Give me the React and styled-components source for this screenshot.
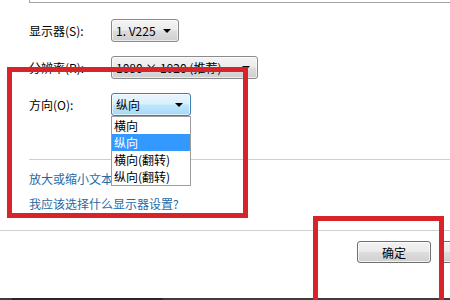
import React from 'react'
import styled, { createGlobalStyle } from 'styled-components'

const GlobalStyle = createGlobalStyle`
  html, body {
    margin: 0;
    padding: 0;
    background: #ffffff;
  }
  body {
    font-family: "Noto Sans CJK SC", "Liberation Sans", sans-serif;
    font-size: 12px;
    color: #000;
  }
`

const Window = styled.div`
  position: relative;
  width: 450px;
  height: 300px;
  overflow: hidden;
  background: #fff;
  display: flex;
  flex-direction: column;
`

const Preview = styled.div`
  height: 2px;
  margin-left: 29px;
  border-left: 1px solid #a3a3a3;
  border-bottom: 1px solid #a3a3a3;
`

const Form = styled.div`
  display: flex;
  flex-direction: column;
  gap: 14px;
  padding: 16px 0 0 29px;
`

const Row = styled.div`
  display: flex;
  align-items: center;
  height: 23px;
  position: relative;
`

const Label = styled.div`
  width: 82px;
  line-height: 16px;
`

const Combo = styled.div`
  box-sizing: border-box;
  width: ${p => p.$w}px;
  height: 23px;
  display: flex;
  align-items: center;
  justify-content: space-between;
  padding: 0 7px 0 4px;
  border: 1px solid ${p => (p.$focus ? '#3c7fb1' : '#8a8a8a')};
  border-radius: 3px;
  background: ${p =>
    p.$focus
      ? 'linear-gradient(#eaf6fd 0%, #d9f0fc 48%, #bee6fd 52%, #a7d9f5 100%)'
      : 'linear-gradient(#f4f4f4 0%, #ebebeb 48%, #dddddd 52%, #cfcfcf 100%)'};
  box-shadow: inset 0 0 0 1px rgba(255, 255, 255, 0.6);
  white-space: nowrap;
`

const Arrow = styled.span`
  width: 0;
  height: 0;
  border-left: 4px solid transparent;
  border-right: 4px solid transparent;
  border-top: 4px solid #000;
`

const List = styled.ul`
  position: absolute;
  top: 23px;
  left: 82px;
  z-index: 2;
  box-sizing: border-box;
  width: 80px;
  margin: 0;
  padding: 0;
  list-style: none;
  background: #fff;
  border: 1px solid #9c9c9c;
`

const Item = styled.li`
  height: 17px;
  line-height: 17px;
  padding-left: 2px;
  background: ${p => (p.$sel ? '#3399ff' : 'transparent')};
  color: ${p => (p.$sel ? '#fff' : '#000')};
`

const Divider = styled.div`
  height: 1px;
  background: #d0d0d0;
  margin-left: ${p => p.$inset || 0}px;
  margin-top: ${p => p.$top}px;
`

const Links = styled.div`
  display: flex;
  flex-direction: column;
  gap: 9px;
  padding: 11px 0 0 29px;
`

const Link = styled.a`
  color: #1f6aa5;
  line-height: 16px;
  text-decoration: none;
`

const Footer = styled.div`
  display: flex;
  gap: 10px;
  padding: 10px 0 0 357px;
`

const Button = styled.button`
  flex: none;
  width: 74px;
  height: 22px;
  padding: 0;
  font: inherit;
  color: #000;
  border: 1px solid #707070;
  border-radius: 3px;
  background: linear-gradient(#f2f2f2 0%, #ebebeb 48%, #dddddd 52%, #cfcfcf 100%);
  box-shadow: inset 0 0 0 1px rgba(255, 255, 255, 0.7);
`

const Taskbar = styled.div`
  margin-top: auto;
  height: 2px;
  background: #3d3d3d;
  display: flex;
`

const TaskItem = styled.div`
  margin-left: 12px;
  width: 151px;
  background: #272727;
`

const Mark = styled.div`
  position: absolute;
  z-index: 3;
  box-sizing: border-box;
  left: ${p => p.$x}px;
  top: ${p => p.$y}px;
  width: ${p => p.$w}px;
  height: ${p => p.$h}px;
  border: 5px solid #d8232b;
`

export default function App() {
  return (
    <Window>
      <GlobalStyle />
      <Preview />
      <Form>
        <Row>
          <Label>显示器(S):</Label>
          <Combo $w={68}>
            <span>1. V225</span>
            <Arrow />
          </Combo>
        </Row>
        <Row>
          <Label>分辨率(R):</Label>
          <Combo $w={147}>
            <span>1080 × 1920 (推荐)</span>
            <Arrow />
          </Combo>
        </Row>
        <Row>
          <Label>方向(O):</Label>
          <Combo $w={80} $focus>
            <span>纵向</span>
            <Arrow />
          </Combo>
          <List>
            <Item>横向</Item>
            <Item $sel>纵向</Item>
            <Item>横向(翻转)</Item>
            <Item>纵向(翻转)</Item>
          </List>
        </Row>
      </Form>
      <Divider $inset={29} $top={43} />
      <Links>
        <Link>放大或缩小文本和其他项目</Link>
        <Link>我应该选择什么显示器设置?</Link>
      </Links>
      <Divider $top={18} />
      <Footer>
        <Button>确定</Button>
        <Button>取消</Button>
      </Footer>
      <Taskbar>
        <TaskItem />
      </Taskbar>
      <Mark $x={7} $y={67} $w={241} $h={151} />
      <Mark $x={313} $y={216} $w={131} $h={100} />
    </Window>
  )
}
